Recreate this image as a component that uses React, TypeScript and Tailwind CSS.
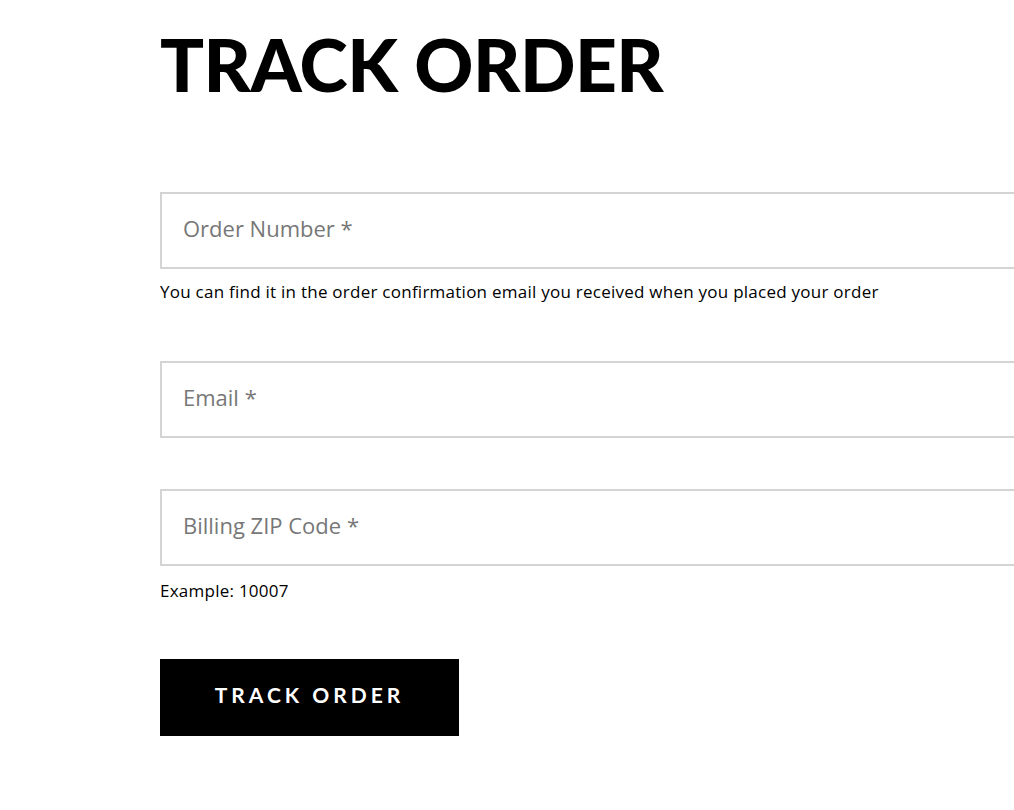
export default function App() {
  const body = { fontFamily: '"Open Sans", "Noto Sans", sans-serif' };
  return (
    <div className="w-[1014px] h-[810px] overflow-hidden bg-white" style={body}>
      <div className="pl-[160px] pt-[22px]">
        <h1 className="text-[73px] leading-[84px] font-black tracking-[-0.5px] text-black" style={{ fontFamily: '"Lato", sans-serif' }}>
          TRACK ORDER
        </h1>
        <div className="mt-[86px] w-[900px]">
          <input
            placeholder="Order Number *"
            className="block w-full h-[77px] border-2 border-[#d4d4d4] pl-[21px] pr-[22px] pb-[5px] text-[22px] text-black placeholder:text-[#777777] outline-none"
          />
          <p className="mt-[13px] text-[17px] leading-[20px] tracking-[0.25px] text-black">
            You can find it in the order confirmation email you received when you placed your order
          </p>
          <input
            placeholder="Email *"
            className="mt-[59px] block w-full h-[77px] border-2 border-[#d4d4d4] pl-[21px] pr-[22px] pb-[5px] text-[22px] text-black placeholder:text-[#777777] outline-none"
          />
          <input
            placeholder="Billing ZIP Code *"
            className="mt-[51px] block w-full h-[77px] border-2 border-[#d4d4d4] pl-[21px] pr-[22px] pb-[5px] text-[22px] text-black placeholder:text-[#777777] outline-none"
          />
          <p className="mt-[15px] text-[17px] leading-[20px] tracking-[0.25px] text-black">Example: 10007</p>
          <button
            className="mt-[58px] w-[299px] h-[77px] pb-[5px] bg-black text-white text-[21px] font-bold tracking-[4px] flex items-center justify-center"
            style={{ fontFamily: '"Lato", sans-serif' }}
          >
            TRACK ORDER
          </button>
        </div>
      </div>
    </div>
  );
}
